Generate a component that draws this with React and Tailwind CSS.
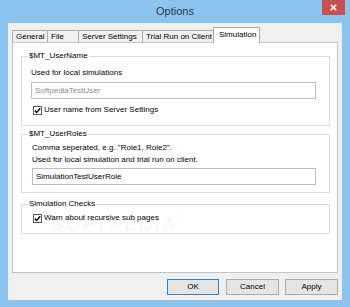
import React from 'react';

// Small Windows 8 style checkbox, always checked in this dialog
const CheckBox = ({ label }) => (
  <div className="flex items-center h-[12px] leading-[12px]">
    <span className="w-[9px] h-[9px] border border-[#5a5a5a] bg-white flex items-center justify-center shrink-0">
      <svg width="7" height="7" viewBox="0 0 7 7">
        <path d="M0.8 3.6 L2.7 5.5 L6.2 1.2" fill="none" stroke="#111" strokeWidth="1.5" />
      </svg>
    </span>
    <span className="ml-[2px] whitespace-nowrap">{label}</span>
  </div>
);

// Group box with the caption sitting on the top border
const GroupBox = ({ title, className = '', children }) => (
  <fieldset className={`border border-[#dcdcdc] m-0 p-0 min-w-0 ${className}`}>
    <legend className="ml-[6px] px-[1px] leading-[10px] whitespace-nowrap">{title}</legend>
    {children}
  </fieldset>
);

const tabs = [
  { name: 'General', w: 'w-[36px]' },
  { name: 'File', w: 'w-[32px]' },
  { name: 'Server Settings', w: 'w-[65px]' },
  { name: 'Trial Run on Client', w: 'w-[72px]' },
];

export default function App() {
  return (
    <div className="w-[350px] h-[307px] bg-[#8cc4f0] flex flex-col text-[8px] text-black font-['Liberation_Sans',Arial,sans-serif]">
      {/* Title bar */}
      <div className="relative h-[23px] flex items-center justify-center shrink-0">
        <span className="text-[11px] text-[#2c3a4a]">Options</span>
        <div className="absolute right-[5px] top-0 w-[23px] h-[15px] bg-[#c75050] flex items-center justify-center">
          <svg width="7" height="7" viewBox="0 0 7 7">
            <path d="M0.8 0.8 L6.2 6.2 M6.2 0.8 L0.8 6.2" stroke="#fff" strokeWidth="1.6" />
          </svg>
        </div>
      </div>

      {/* Client area */}
      <div className="mx-[8px] h-[277px] bg-[#f0f0f0] flex flex-col px-[4px] pt-[4px] shrink-0">
        {/* Tab strip */}
        <div className="flex items-end h-[15px] relative z-10">
          {tabs.map((t, i) => (
            <div
              key={t.name}
              className={`${t.w} h-[12px] border border-b-0 border-[#acacac] bg-[#f0f0f0] pl-[3px] leading-[11px] whitespace-nowrap ${i > 0 ? '-ml-px' : ''}`}
            >
              {t.name}
            </div>
          ))}
          <div className="w-[47px] h-[16px] -ml-px -mb-px border border-b-0 border-[#acacac] bg-white pl-[5px] leading-[13px] whitespace-nowrap">
            Simulation
          </div>
        </div>

        {/* Tab page */}
        <div className="relative h-[231px] bg-white border border-[#c4c4c4] pl-[8px] pr-[7px] pt-[8px]">
          <GroupBox title="$MT_UserName">
            <div className="pl-[9px] pt-[6px] pb-[9px]">
              <div className="leading-[12px]">Used for local simulations</div>
              <div className="mt-[3px] w-[285px] h-[17px] border border-[#bdbdbd] bg-white pl-[3px] leading-[15px] text-[#8c8c8c]">
                SoftpediaTestUser
              </div>
              <div className="mt-[5px] pl-[2px]">
                <CheckBox label="User name from Server Settings" />
              </div>
            </div>
          </GroupBox>

          <GroupBox title="$MT_UserRoles" className="mt-[3px]">
            <div className="pl-[10px] pt-[3px] pb-[7px]">
              <div className="leading-[12px]">Comma seperated, e.g. "Role1, Role2".</div>
              <div className="leading-[12px]">Used for local simulation and trial run on client.</div>
              <div className="mt-[2px] w-[284px] h-[17px] border border-[#bdbdbd] bg-white pl-[3px] leading-[15px]">
                SimulationTestUserRole
              </div>
            </div>
          </GroupBox>

          <GroupBox title="Simulation Checks" className="mt-[6px]">
            <div className="pl-[11px] pt-[3px] pb-[9px]">
              <CheckBox label="Warn about recursive sub pages" />
            </div>
          </GroupBox>

          {/* faint watermark over the page */}
          <div className="absolute left-[38px] top-[168px] text-[19px] font-bold tracking-[2px] text-black/[0.05] pointer-events-none select-none">
            SOFTPEDIA<span className="text-[8px] align-top">®</span>
          </div>
        </div>

        {/* Dialog buttons */}
        <div className="flex justify-end mt-[6px]">
          <button className="w-[52px] h-[16px] border border-[#3c7fb1] bg-[#e5e5e5] leading-[14px] text-[8px]">OK</button>
          <button className="ml-[7px] w-[53px] h-[16px] border border-[#acacac] bg-[#e5e5e5] leading-[14px] text-[8px]">Cancel</button>
          <button className="ml-[6px] w-[53px] h-[16px] border border-[#acacac] bg-[#e5e5e5] leading-[14px] text-[8px]">Apply</button>
        </div>
      </div>
    </div>
  );
}
